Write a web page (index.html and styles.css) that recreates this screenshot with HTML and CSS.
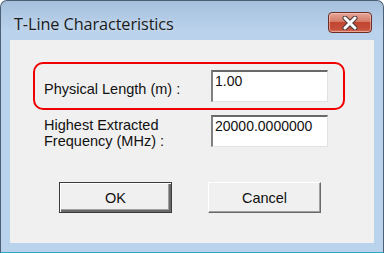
FILE: index.html
```html
<!DOCTYPE html>
<html lang="en">
<head>
    <meta charset="UTF-8">
    <title>T-Line Characteristics</title>
    <link rel="stylesheet" href="styles.css">
</head>
<body>

<div class="window">
    <div class="titlebar">
        <span class="title">T-Line Characteristics</span>
        <button class="close" type="button" aria-label="Close">
            <svg width="18" height="14" viewBox="0 0 18 14">
                <path d="M4 2 L14 12 M14 2 L4 12" stroke="#4a3a3a" stroke-width="5" stroke-linecap="round"/>
                <path d="M4 2 L14 12 M14 2 L4 12" stroke="#fff" stroke-width="3" stroke-linecap="round"/>
            </svg>
        </button>
    </div>

    <div class="client">
        <div class="field marked">
            <label class="label low" for="length">Physical Length (m) :</label>
            <input class="edit" id="length" type="text" value="1.00">
        </div>

        <div class="field">
            <label class="label" for="freq">Highest Extracted<br>Frequency (MHz) :</label>
            <input class="edit" id="freq" type="text" value="20000.0000000">
        </div>

        <div class="buttons">
            <button class="btn default" type="button">OK</button>
            <button class="btn" type="button">Cancel</button>
        </div>
    </div>
</div>

</body>
</html>
```

FILE: styles.css
```css
* { margin: 0; padding: 0; box-sizing: border-box; }
html, body { width: 384px; height: 253px; overflow: hidden; background: #fff; }
body { font-family: 'Liberation Sans', Arial, sans-serif; }

.window {
    width: 384px;
    height: 253px;
    display: flex;
    flex-direction: column;
    border: 1px solid #4c5f74;
    border-bottom-color: #2fa6c4;
    border-radius: 7px 7px 0 0;
    background: linear-gradient(#a6c0dd, #bad2eb 30px, #bad3ec);
    padding: 0 9px 9px 9px;
}

.titlebar {
    height: 39px;
    display: flex;
    align-items: flex-start;
    justify-content: space-between;
}

.title {
    font-family: 'Open Sans', 'Noto Sans', sans-serif;
    font-size: 16.3px;
    color: #1b1b1b;
    margin: 12px 0 0 4px;
    letter-spacing: -0.1px;
    text-shadow: 0 0 6px rgba(255, 255, 255, 0.5);
}

.close {
    width: 44px;
    height: 21px;
    margin-top: 11px;
    margin-right: 2px;
    border: 1px solid #6a2c26;
    border-radius: 4px;
    background: linear-gradient(#e6a797, #d47a66 45%, #c2452f 50%, #c5503b 85%, #d9735d);
    box-shadow: inset 0 0 0 1px rgba(255, 220, 210, 0.5);
    display: flex;
    align-items: center;
    justify-content: center;
}

.client {
    flex: 1;
    background: #f0f0f0;
    padding: 22px 0 0 23px;
}

.field {
    display: grid;
    grid-template-columns: 167px 117px;
    width: 312px;
    padding: 0 0 0 9px;
    border: 2px solid transparent;
}

.field.marked {
    height: 48px;
    padding-top: 6px;
    border-color: #f00000;
    border-radius: 10px;
}

.field + .field { margin-top: 3px; padding-top: 0; }

.label {
    font-size: 14.5px;
    line-height: 16px;
    color: #111;
    padding-top: 2px;
}

.label.low { padding-top: 11px; }

.edit {
    width: 117px;
    height: 32px;
    font-family: 'Liberation Sans', Arial, sans-serif;
    font-size: 14px;
    color: #111;
    background: #fff;
    padding: 0 0 12px 2px;
    border-style: solid;
    border-width: 2px 1px 1px 2px;
    border-color: #696969 #e3e3e3 #e3e3e3 #808080;
    outline: none;
}

.buttons {
    display: flex;
    gap: 36px;
    margin: 31px 0 0 26px;
}

.btn {
    width: 113px;
    height: 31px;
    font-family: 'Liberation Sans', Arial, sans-serif;
    font-size: 14.5px;
    color: #111;
    background: #f0f0f0;
    border: 1px solid;
    border-color: #fff #696969 #696969 #fff;
    box-shadow: inset -1px -1px 0 #a0a0a0;
}

.btn.default {
    border: 1px solid #3c3c3c;
    box-shadow: inset 1px 1px 0 #fff, inset -2px -2px 0 #696969, inset -3px -3px 0 #a0a0a0;
}
```
